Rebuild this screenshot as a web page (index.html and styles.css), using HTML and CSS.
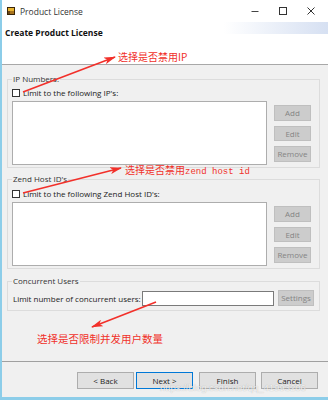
FILE: index.html
```html
<!DOCTYPE html>
<html>
<head>
<meta charset="utf-8">
<link rel="stylesheet" href="styles.css">
</head>
<body>
<div class="window">
  <div class="titlebar">
    <svg class="app-icon" width="8" height="8" viewBox="0 0 8 8">
      <rect x="0.5" y="0.5" width="7" height="7" fill="#6b4414" stroke="#3a2508"/>
      <rect x="1" y="1" width="6" height="3" fill="#e8b430"/>
      <rect x="3" y="4" width="4" height="3" fill="#a8741e"/>
    </svg>
    <span class="title">Product License</span>
    <div class="controls">
      <span class="ctl"><svg width="8" height="8" viewBox="0 0 8 8"><path d="M0.5 4.5H7.5" stroke="#444" stroke-width="1"/></svg></span>
      <span class="ctl"><svg width="8" height="8" viewBox="0 0 8 8"><rect x="0.5" y="0.5" width="7" height="7" fill="none" stroke="#333" stroke-width="1"/></svg></span>
      <span class="ctl"><svg width="8" height="8" viewBox="0 0 8 8"><path d="M0.5 0.5L7.5 7.5M7.5 0.5L0.5 7.5" stroke="#333" stroke-width="1"/></svg></span>
    </div>
  </div>
  <div class="banner">
    <h1 class="banner-title">Create Product License</h1>
  </div>
  <main class="content">
    <fieldset class="group group-ip">
      <legend class="legend">IP Numbers:</legend>
      <div class="check-row"><span class="box"></span><span>Limit to the following IP's:</span></div>
      <div class="list-row">
        <div class="listbox"></div>
        <div class="side-btns">
          <button class="btn disabled">Add</button>
          <button class="btn disabled mid">Edit</button>
          <button class="btn disabled">Remove</button>
        </div>
      </div>
    </fieldset>
    <fieldset class="group group-zend">
      <legend class="legend">Zend Host ID's</legend>
      <div class="check-row"><span class="box"></span><span>Limit to the following Zend Host ID's:</span></div>
      <div class="list-row">
        <div class="listbox"></div>
        <div class="side-btns">
          <button class="btn disabled">Add</button>
          <button class="btn disabled mid">Edit</button>
          <button class="btn disabled">Remove</button>
        </div>
      </div>
    </fieldset>
    <fieldset class="group group-users">
      <legend class="legend">Concurrent Users</legend>
      <div class="users-row">
        <span class="users-label">Limit number of concurrent users:</span>
        <span class="textinput"></span>
        <button class="btn disabled settings">Settings</button>
      </div>
    </fieldset>
  </main>
  <footer class="footer">
    <button class="btn nav">&lt; Back</button>
    <button class="btn nav default next">Next &gt;</button>
    <button class="btn nav finish">Finish</button>
    <button class="btn nav cancel">Cancel</button>
  </footer>
</div>

<svg class="arrows" width="328" height="400" viewBox="0 0 328 400">
  <defs>
    <marker id="ah" viewBox="0 0 12 7" refX="11" refY="3.5" markerWidth="12" markerHeight="7" markerUnits="userSpaceOnUse" orient="auto">
      <path d="M0,0 L12,3.5 L0,7 L3,3.5 z" fill="#f2302a"/>
    </marker>
  </defs>
  <line x1="23" y1="92" x2="115" y2="57" stroke="#f2302a" stroke-width="1.6" marker-end="url(#ah)"/>
  <line x1="23" y1="193" x2="121" y2="168" stroke="#f2302a" stroke-width="1.6" marker-end="url(#ah)"/>
  <line x1="156" y1="302" x2="92" y2="327" stroke="#f2302a" stroke-width="1.6" marker-end="url(#ah)"/>
</svg>
<span class="note note-ip">选择是否禁用IP</span>
<span class="note note-zend">选择是否禁用<span class="mono">zend host id</span></span>
<span class="note note-users">选择是否限制并发用户数量</span>
<span class="watermark">https://blog.csdn.net/qq_41993206</span>
</body>
</html>
```
FILE: styles.css
```css
* { box-sizing: border-box; }
html, body { margin: 0; padding: 0; }
body {
  position: relative;
  width: 328px;
  height: 400px;
  overflow: hidden;
  font-family: "Open Sans", "Noto Sans", sans-serif;
  font-size: 8px;
  color: #222;
  background: #f0f0f0;
}
.window {
  width: 328px;
  height: 400px;
  display: flex;
  flex-direction: column;
  background: #f0f0f0;
  border-left: 2px solid #8ccde9;
  border-bottom: 3px solid #8ccde9;
}
.titlebar {
  height: 22px;
  flex: none;
  background: #fff;
  display: flex;
  align-items: center;
  padding-left: 5px;
}
.app-icon { display: block; flex: none; }
.title {
  margin-left: 5px;
  font-size: 8.5px;
  color: #333;
}
.controls {
  margin-left: auto;
  display: flex;
  padding-right: 3px;
}
.ctl {
  width: 28px;
  height: 22px;
  display: flex;
  align-items: center;
  justify-content: center;
}
.ctl svg { display: block; }
.banner {
  height: 43px;
  flex: none;
  background: linear-gradient(to right, #fff 0%, #fff 68%, #d6e0f2 100%) 0 0 / 100% 12px no-repeat, #fff;
  border-bottom: 1px solid #a8a8a8;
  padding: 5px 0 0 3px;
}
.banner-title {
  margin: 0;
  font-size: 8.5px;
  line-height: 12px;
  font-weight: 700;
  color: #111;
}
.content {
  flex: 1;
  padding: 8px 8px 0 5px;
}
.group {
  margin: 0;
  min-width: 0;
  border: 1px solid #dcdcdc;
  padding: 3px 8px 2px 4px;
}
.group-zend { margin-top: 5px; padding-top: 4px; }
.group-users { margin-top: 6px; padding: 3px 5px 4px 4px; }
.legend {
  padding: 0 1px;
  line-height: 12px;
  font-size: 8px;
  color: #333;
}
.check-row {
  height: 10px;
  display: flex;
  align-items: center;
  line-height: 10px;
}
.box {
  width: 8px;
  height: 8px;
  border: 1px solid #333;
  background: #fff;
  margin-right: 3px;
  flex: none;
}
.list-row {
  margin-top: 3px;
  display: flex;
  gap: 7px;
}
.listbox {
  width: 255px;
  height: 64px;
  background: #fff;
  border: 1px solid #adadad;
}
.side-btns {
  padding-top: 4px;
  display: flex;
  flex-direction: column;
  gap: 5px;
}
.btn {
  margin: 0;
  padding: 0;
  font-family: inherit;
  font-size: 8px;
  line-height: 1;
  background: #e1e1e1;
  border: 1px solid #adadad;
  color: #222;
  border-radius: 0;
}
.btn.disabled {
  width: 37px;
  height: 16px;
  background: #cccccc;
  border-color: #bfbfbf;
  color: #848484;
}
.btn.disabled.mid { height: 15px; }
.users-row {
  height: 16px;
  display: flex;
  align-items: center;
}
.users-label { flex: 1; padding-left: 1px; }
.textinput {
  width: 132px;
  height: 15px;
  background: #fff;
  border: 1px solid #7a7a7a;
  margin-right: 4px;
}
.btn.settings { width: 36px; height: 16px; }
.footer {
  flex: none;
  height: 36px;
  border-top: 1px solid #a0a0a0;
  display: flex;
  align-items: flex-start;
  justify-content: flex-end;
  padding: 10px 10px 0 0;
}
.btn.nav { width: 57px; height: 17px; }
.btn.next { margin-left: 2px; }
.btn.default { border-color: #0078d7; }
.btn.finish { margin-left: 6px; }
.btn.cancel { margin-left: 5px; }
.arrows {
  position: absolute;
  left: 0;
  top: 0;
  pointer-events: none;
}
.note {
  position: absolute;
  font-family: "Noto Sans CJK SC", "Noto Sans", sans-serif;
  font-size: 10px;
  line-height: 12px;
  color: #f0302a;
  white-space: nowrap;
}
.mono { font-family: "Liberation Mono", monospace; font-size: 9px; }
.note-ip { left: 118px; top: 51px; }
.note-zend { left: 125px; top: 164px; }
.note-users { left: 37px; top: 333px; font-size: 10.5px; }
.watermark {
  position: absolute;
  left: 160px;
  top: 382px;
  font-family: "Liberation Sans", sans-serif;
  font-size: 9.5px;
  line-height: 12px;
  color: rgba(255, 255, 255, 0.85);
  text-shadow: 0 0 1px rgba(0, 0, 0, 0.3);
  white-space: nowrap;
}
```
